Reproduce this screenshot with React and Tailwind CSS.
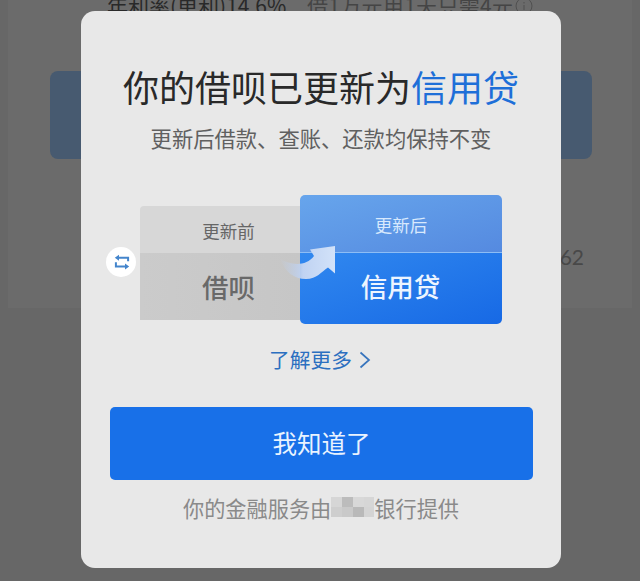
function SwapIcon() {
  return (
    <svg viewBox="0 0 18 18" className="h-[18px] w-[18px]" fill="none" stroke="#4485cc" strokeWidth="2">
      <path d="M15.100 8.200V4.800H5" />
      <path d="M2.900 9.200v4.200H13" />
      <path d="M6 1.800v6L1.800 4.800zM12 10.400v6l4.200-3z" fill="#4485cc" stroke="none" />
    </svg>
  );
}

function ArrowSwoosh() {
  return (
    <svg viewBox="0 0 60 38" className="absolute left-[136px] top-[50px] h-[38px] w-[60px]">
      <defs>
        <linearGradient id="swoosh" x1="0" x2="1" y1="0" y2="0">
          <stop offset="0" stopColor="#c3cfe3" stopOpacity="0" />
          <stop offset="0.25" stopColor="#c0cee6" stopOpacity="0.75" />
          <stop offset="0.42" stopColor="#c0d3f2" />
          <stop offset="1" stopColor="#d2e2f9" />
        </linearGradient>
      </defs>
      <path
        d="M4 14C14 20 30 22 38 11L34 4.500L59 1V28.500L52 22.500C45 27 41 34 30 34C18 34 9 27 4 14Z"
        fill="url(#swoosh)"
      />
    </svg>
  );
}

const MOSAIC = [
  "bg-[#d6d6d6]", "bg-[#bcbcbc]", "bg-[#d8d8d8]", "bg-[#d6d6d6]",
  "bg-[#cecece]", "bg-[#c9c9c9]", "bg-[#cfcfcf]", "bg-[#d4d4d4]",
];

function Backdrop() {
  return (
    <div className="h-full px-2">
      <div className="h-[308px] w-[624px] bg-[#6b6b6b]">
        <div className="flex h-[71px] items-start pl-[99px]">
          <div className="-mt-[9px] flex h-[30px] items-center whitespace-nowrap">
            <span className="w-[200px] text-[21px] text-[#292929]">年利率(单利)14.6%</span>
            <span className="text-[21px] tracking-[0.3px] text-[#454545]">借1万元用1天只需4元</span>
            <svg viewBox="0 0 18 18" className="ml-0.5 h-[18px] w-[18px]" fill="none" stroke="#505050">
              <circle cx="9" cy="9" r="8" />
              <path d="M9 8v5M9 5v1.5" />
            </svg>
          </div>
        </div>
        <div className="ml-[42px] h-[88px] w-[542px] rounded-lg bg-[#475a70]" />
        <div className="mt-[83px] flex h-[30px] w-[576px] items-center justify-end font-['Lato'] text-[21px] text-[#484848]">
          62
        </div>
      </div>
    </div>
  );
}

export default function App() {
  return (
    <div className="relative h-[581px] w-[640px] overflow-hidden bg-[#676767] font-['Noto_Sans_CJK_SC',sans-serif]">
      <Backdrop />
      <div className="absolute inset-0 flex items-start justify-center pt-[11px]">
        <div className="ml-0.5 flex h-[557px] w-[480px] flex-col rounded-[14px] bg-[#e8e8e8]">
          <h1 className="mt-[51px] flex h-[48px] items-center justify-center whitespace-nowrap text-[36px] text-[#292929]">
            你的借呗已更新为<span className="text-[#1e6fd8]">信用贷</span>
          </h1>
          <p className="mt-[12px] flex h-[32px] items-center justify-center whitespace-nowrap text-[21.3px] text-[#606060]">
            更新后借款、查账、还款均保持不变
          </p>

          <div className="mt-[41px] flex h-[129px] pl-[25px]">
            <div className="mt-[52px] flex h-[30px] w-[30px] shrink-0 items-center justify-center rounded-full bg-white pl-px">
              <SwapIcon />
            </div>
            <div className="relative ml-[4px] flex items-start">
              <div className="mt-[11px] w-[160px] overflow-hidden rounded-tl-[4px]">
                <div className="flex h-[47px] items-center justify-center bg-[#d7d7d7] pl-[17px] pt-[4px] text-[17.5px] text-[#666]">
                  更新前
                </div>
                <div className="flex h-[67px] items-center justify-center bg-gradient-to-r from-[#cbcbcb] to-[#c6c6c6] pl-[17px] text-[26.5px] font-medium text-[#696969]">
                  借呗
                </div>
              </div>
              <div className="w-[202px] overflow-hidden rounded-[5px]">
                <div className="flex h-[58px] items-center justify-center border-b border-[#8dbdf5] bg-gradient-to-br from-[#67a5ec] to-[#558ae0] pt-[4px] text-[17.5px] text-[#d8e9fd]">
                  更新后
                </div>
                <div className="flex h-[71px] items-center justify-center bg-gradient-to-br from-[#3188ef] to-[#1769e5] pb-[6px] pr-px text-[26.5px] font-medium text-[#edf5ff]">
                  信用贷
                </div>
              </div>
              <ArrowSwoosh />
            </div>
          </div>

          <div className="mt-[20px] flex h-[32px] items-center justify-center whitespace-nowrap pr-[2px] text-[20.7px] text-[#2b6fc0]">
            了解更多
            <svg viewBox="0 0 12 18" className="ml-[7px] h-[18px] w-3" fill="none" stroke="#3774bd" strokeWidth="1.7">
              <path d="M1.5 1.5L10 9l-8.500 7.500" />
            </svg>
          </div>

          <button className="ml-[29px] mt-[31px] flex h-[73px] w-[423px] items-center justify-center rounded-[5px] bg-[#1870e8] text-[24.5px] text-[#e9f3ff]">
            我知道了
          </button>

          <div className="mt-[12px] flex h-[32px] items-center justify-center whitespace-nowrap text-[21.200px] text-[#8a8a8a]">
            你的金融服务由
            <span className="-mt-[3px] grid h-[20px] w-[43px] grid-cols-4 grid-rows-2 overflow-hidden">
              {MOSAIC.map((shade, i) => (
                <span key={i} className={i === 6 ? "bg-[#b9b9b9]" : shade} />
              ))}
            </span>
            银行提供
          </div>
        </div>
      </div>
    </div>
  );
}
